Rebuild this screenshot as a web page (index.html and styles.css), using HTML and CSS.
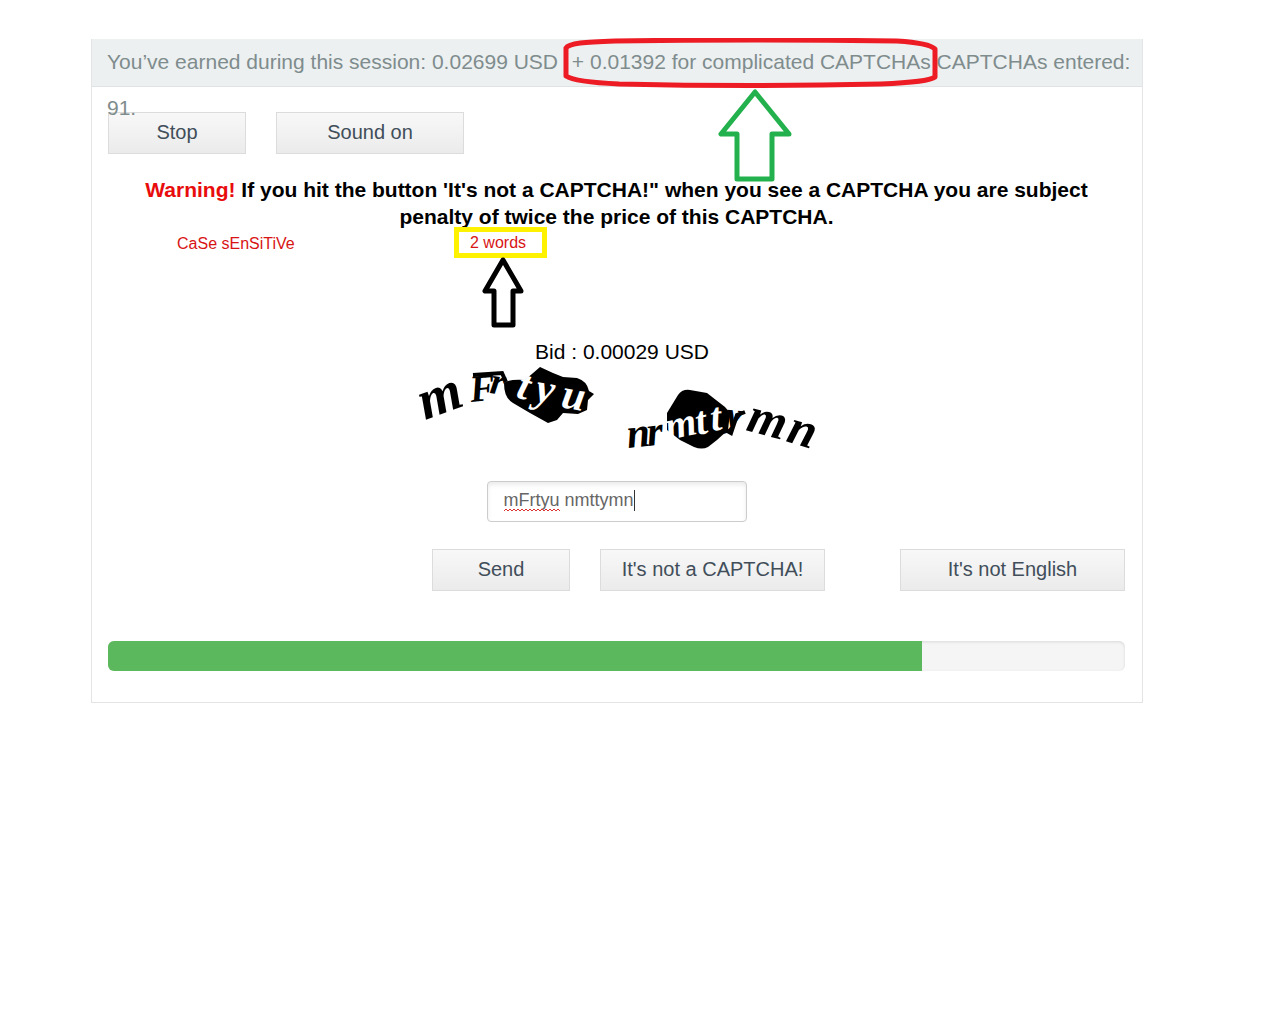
FILE: index.html
```html
<!DOCTYPE html>
<html lang="en">
<head>
<meta charset="utf-8">
<title>CAPTCHA session</title>
<link rel="stylesheet" href="styles.css">
</head>
<body>
<main class="card">
  <header class="card-header">
    You’ve earned during this session: 0.02699 USD <span class="bonus">+ 0.01392 for complicated CAPTCHAs<svg class="ring" width="376" height="50" viewBox="0 0 376 50" aria-hidden="true"><path d="M3 10C6 5 22 4 52 3Q188 1 334 3Q366 5 372 11V39Q366 44 318 46Q188 49 56 46Q12 44 3 38Z"/></svg><svg class="arrow-green" width="76" height="96" viewBox="0 0 76 96" aria-hidden="true"><path d="M38 4L4 46H20V91H55V46H72Z"/></svg></span> CAPTCHAs entered:<br>91.
  </header>
  <section class="card-body">
    <div class="toolbar">
      <button type="button" class="btn btn-small">Stop</button>
      <button type="button" class="btn btn-medium">Sound on</button>
    </div>
    <p class="warning"><span class="alert">Warning!</span> If you hit the button 'It's not a CAPTCHA!" when you see a CAPTCHA you are subject<br>penalty of twice the price of this CAPTCHA.</p>
    <div class="hints">
      <span>CaSe sEnSiTiVe</span>
      <span class="words">2 words<svg class="arrow-black" width="42" height="72" viewBox="0 0 42 72" aria-hidden="true"><path d="M21 3L3 34H12V68H31V34H39Z"/></svg></span>
    </div>
    <p class="bid">Bid : 0.00029 USD</p>
    <svg class="challenge" width="420" height="90" viewBox="407 366 420 90" role="img" aria-label="Challenge picture">
      <path d="M504 383Q508 379 525 380L540 367L553 373L563 377L577 378Q587 381 589 391L594 394L588 400L587 410L578 414L563 413L557 420L548 423L530 413L513 403Q504 398 504 383Z"/>
      <path d="M667 413L678 395Q682 389 690 390L707 393L725 407L730 413L728 430L717 440L708 447Q702 450 694 447L680 440L667 430Z"/>
      <path class="streak" d="M473 375L502 373L506 382M722 428L731 433L737 415L745 412"/>
      <g class="ink">
        <text x="425" y="420" rotate="-20" font-size="56">m</text>
        <text x="471 489" y="402 393" rotate="-6 8" font-size="38">Fr</text>
        <text class="reversed" x="515 534 560" y="397 401 407" rotate="16 10 10" font-size="42">tyu</text>
        <text x="628 648" y="448 446" rotate="-6 -6" font-size="42">nr</text>
        <text class="reversed" x="668 698 712" y="440 435 431" rotate="-12 -12 -8" font-size="40">mtt</text>
        <text x="725" y="426" rotate="6" font-size="36">y</text>
        <text x="745 785" y="430 441" rotate="15 17" font-size="50">mn</text>
      </g>
    </svg>
    <div class="answer">
      <input class="answer-input" type="text" value="mFrtyu nmttymn" aria-label="CAPTCHA text" spellcheck="false">
      <svg class="squiggle" width="56" height="4" viewBox="0 0 56 4" aria-hidden="true"><path d="M0 3l2-2 2 2 2-2 2 2 2-2 2 2 2-2 2 2 2-2 2 2 2-2 2 2 2-2 2 2 2-2 2 2 2-2 2 2 2-2 2 2 2-2 2 2 2-2 2 2 2-2 2 2 2-2 2 2"/></svg>
      <span class="caret"></span>
    </div>
    <div class="actions">
      <button type="button" class="btn btn-small">Send</button>
      <button type="button" class="btn btn-large">It's not a CAPTCHA!</button>
      <button type="button" class="btn btn-large last">It's not English</button>
    </div>
    <div class="progress" role="progressbar" aria-label="Time left" aria-valuenow="80" aria-valuemin="0" aria-valuemax="100"><div class="bar" style="width:80%"></div></div>
  </section>
</main>
</body>
</html>
```
FILE: styles.css
```css
* { box-sizing: border-box; }
body {
  margin: 0;
  background: #fff;
  color: #000;
  font-family: "Liberation Sans", Arial, sans-serif;
  font-size: 21px;
}
p { margin: 0; }
.card {
  margin: 39px 137px 0 91px;
  border: 1px solid #e2e4e5;
  border-top: 0;
}
.card-header {
  position: relative;
  z-index: 1;
  height: 48px;
  padding: 0 15px;
  background: #ecf0f1;
  border-bottom: 1px solid #dfe3e4;
  color: #7f8c8d;
  line-height: 46px;
  white-space: nowrap;
}
.bonus { position: relative; margin-left: 8px; }
.ring, .arrow-green, .arrow-black {
  position: absolute;
  fill: none;
  stroke-width: 5;
  stroke-linejoin: round;
}
.ring { left: -9px; top: -12px; stroke: #ed1c24; }
.arrow-green { left: 145px; top: 38px; stroke: #22b14c; }
.card-body { padding: 25px 17px 31px 16px; }
.toolbar, .actions { display: flex; gap: 30px; }
.btn {
  height: 42px;
  padding: 0 0 2px;
  border: 1px solid #dcdcdc;
  background: linear-gradient(#f8f8f8, #ebebeb);
  color: #414e5a;
  font: 20px "Liberation Sans", Arial, sans-serif;
}
.btn-small { width: 138px; }
.btn-medium { width: 188px; }
.btn-large { width: 225px; }
.warning {
  margin-top: 22px;
  font-weight: bold;
  line-height: 27px;
  text-align: center;
}
.alert { color: #e80c0c; }
.hints {
  display: flex;
  padding-left: 69px;
  color: #d81414;
  font-size: 16px;
  line-height: 22px;
}
.hints span { width: 277px; }
.hints .words {
  position: relative;
  width: 93px;
  height: 31px;
  margin-top: -3px;
  border: 5px solid #fff200;
  padding-left: 11px;
}
.hints span:first-child { padding-top: 3px; }
.arrow-black { left: 23px; top: 25px; stroke: #000; }
.bid { margin: 81px 0 0 11px; line-height: 26px; text-align: center; }
.challenge { display: block; margin: 1px auto 0; overflow: visible; }
.ink { font-family: "Liberation Serif", serif; font-style: italic; font-weight: bold; fill: #000; }
.reversed { fill: #fff; }
.streak { fill: none; stroke: #000; stroke-width: 4; }
.answer {
  position: relative;
  width: 260px;
  margin: 25px auto 0;
}
.answer-input {
  display: block;
  width: 100%;
  height: 41px;
  padding: 0 16px 2px;
  border: 1px solid #ccc;
  border-radius: 4px;
  box-shadow: inset 0 3px 4px #ececec;
  background: #fff;
  color: #666;
  font: 18px "Liberation Sans", Arial, sans-serif;
}
.squiggle { position: absolute; left: 17px; top: 27px; fill: none; stroke: #d33; }
.caret { position: absolute; left: 147px; top: 9px; width: 1px; height: 21px; background: #333; }
.actions { justify-content: flex-end; margin-top: 27px; }
.last { margin-left: 45px; }
.progress {
  height: 30px;
  margin-top: 50px;
  border-radius: 6px;
  overflow: hidden;
  background: #f5f5f5;
  box-shadow: inset 0 1px 3px #d8d8d8;
}
.bar { height: 100%; background: #5cb85c; }
```
